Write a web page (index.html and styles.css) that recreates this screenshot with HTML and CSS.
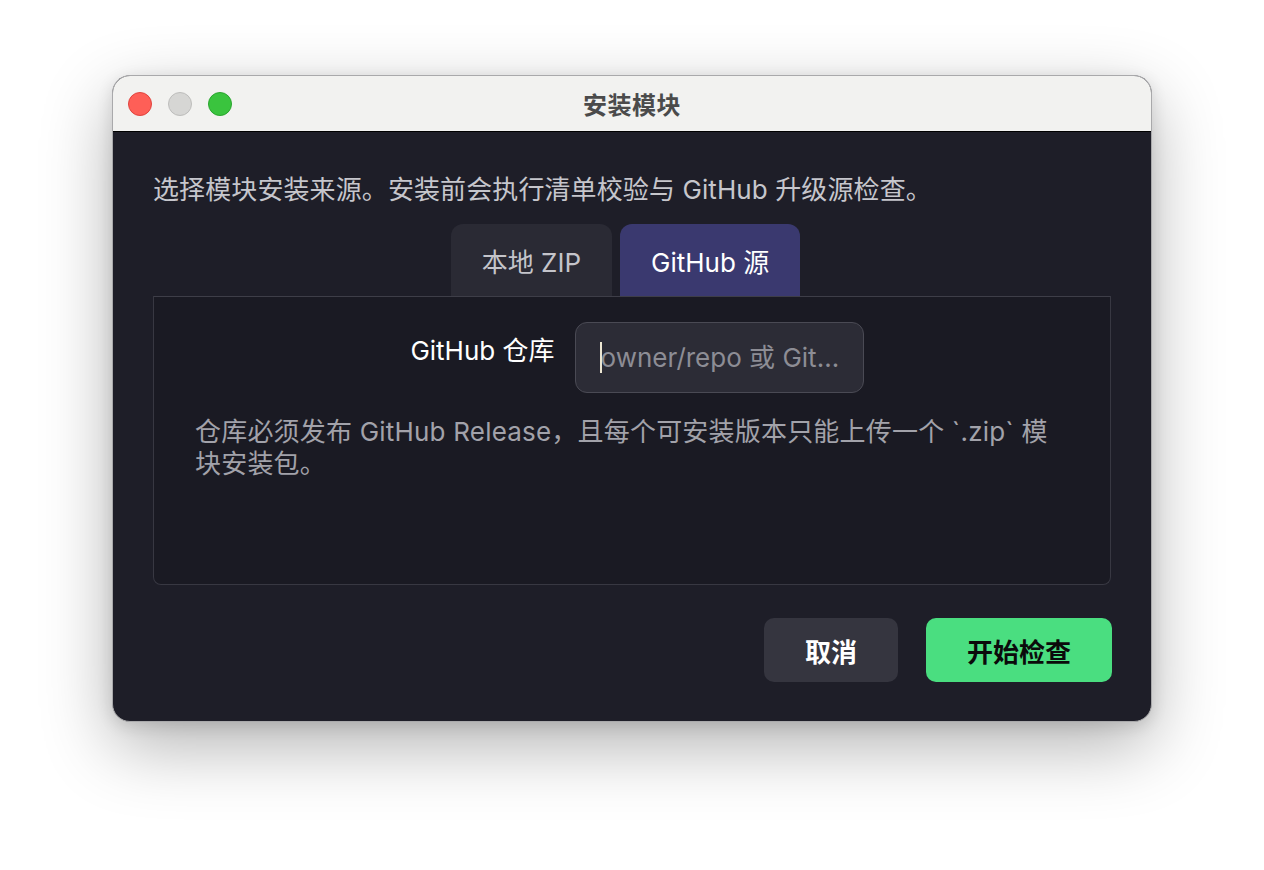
FILE: index.html
```html
<!DOCTYPE html>
<html lang="zh-CN">
<head>
<meta charset="utf-8">
<title>安装模块</title>
<link rel="stylesheet" href="styles.css">
</head>
<body>
<div class="stage">
  <div class="window">
    <div class="titlebar">
      <div class="lights">
        <span class="light red"></span>
        <span class="light gray"></span>
        <span class="light green"></span>
      </div>
      <div class="title">安装模块</div>
    </div>
    <div class="content">
      <p class="desc">选择模块安装来源。安装前会执行清单校验与 GitHub 升级源检查。</p>
      <div class="tabs">
        <div class="tab">本地 ZIP</div>
        <div class="tab active">GitHub 源</div>
      </div>
      <div class="panel">
        <div class="form-row">
          <label class="label" for="repo">GitHub 仓库</label>
          <div class="input-wrap">
            <input id="repo" class="input" type="text" placeholder="owner/repo 或 GitHub URL">
            <span class="caret"></span>
          </div>
        </div>
        <p class="hint">仓库必须发布 GitHub Release，且每个可安装版本只能上传一个 `.zip` 模块安装包。</p>
      </div>
      <div class="actions">
        <button class="btn cancel">取消</button>
        <button class="btn primary">开始检查</button>
      </div>
    </div>
  </div>
</div>
</body>
</html>
```

FILE: styles.css
```css
* { box-sizing: border-box; }

html, body {
  margin: 0;
  padding: 0;
  background: #ffffff;
}

body {
  min-height: 870px;
  font-family: Inter, "Noto Sans CJK SC", "Noto Sans", sans-serif;
}

.stage {
  min-height: 870px;
  display: flex;
  justify-content: center;
  align-items: flex-start;
  padding-top: 75px;
}

.window {
  width: 1040px;
  height: 647px;
  border-radius: 18px;
  overflow: hidden;
  background: #1e1e28;
  border: 1px solid #a9a9ab;
  box-shadow: 0 24px 70px rgba(0, 0, 0, 0.30), 0 4px 16px rgba(0, 0, 0, 0.12);
  display: flex;
  flex-direction: column;
}

.titlebar {
  position: relative;
  height: 56px;
  flex: none;
  background: #f2f2f0;
  border-bottom: 1px solid #000000;
  display: flex;
  align-items: center;
  justify-content: center;
}

.lights {
  position: absolute;
  left: 15px;
  top: 16px;
  display: flex;
  gap: 16px;
}

.light {
  width: 24px;
  height: 24px;
  border-radius: 50%;
}
.light.red { background: #fe5f57; border: 1px solid #e0443e; }
.light.gray { background: #d6d6d4; border: 1px solid #bdbdbb; }
.light.green { background: #3ac43e; border: 1px solid #2aa52e; }

.title {
  font-size: 24px;
  font-weight: 700;
  color: #4b4b4b;
  letter-spacing: 0.5px;
}

.content {
  flex: 1;
  padding: 40px 39px 39px 40px;
  display: flex;
  flex-direction: column;
}

.desc {
  margin: 0;
  font-size: 26px;
  letter-spacing: 0.1px;
  line-height: 36px;
  color: #c6c6cc;
}

.tabs {
  margin-top: 16px;
  display: flex;
  justify-content: center;
  gap: 8px;
  padding-right: 14px;
}

.tab {
  height: 72px;
  padding: 0 31px;
  display: flex;
  align-items: center;
  border-radius: 12px 12px 0 0;
  background: #2a2a34;
  color: #c4c4ca;
  font-size: 26px;
}

.tab.active {
  background: #3a396f;
  color: #ffffff;
}

.panel {
  height: 289px;
  margin-right: 1px;
  background: #1a1a23;
  border: 1px solid #383842;
  border-top-color: #3e3e48;
  border-radius: 0 0 8px 8px;
  padding: 25px 41px 0 41px;
}

.form-row {
  display: flex;
  justify-content: center;
  align-items: flex-start;
  gap: 20px;
  padding-left: 10px;
}

.label {
  font-size: 26px;
  line-height: 36px;
  color: #ffffff;
  padding-top: 11px;
}

.input-wrap {
  position: relative;
}

.input {
  display: block;
  width: 289px;
  height: 71px;
  border-radius: 12px;
  border: 1px solid #4a4a54;
  background: #2c2c36;
  padding: 0 18px 0 25px;
  font-family: Inter, "Noto Sans CJK SC", sans-serif;
  font-size: 26px;
  color: #e8e8ec;
  outline: none;
  text-overflow: ellipsis;
}

.input::placeholder {
  color: #8d8d95;
}

.caret {
  position: absolute;
  left: 25px;
  top: 20px;
  width: 2px;
  height: 31px;
  background: #ece6d2;
}

.hint {
  margin: 23px 0 0 0;
  font-size: 26px;
  letter-spacing: 0.2px;
  line-height: 32px;
  color: #a2a2aa;
}

.actions {
  margin-top: auto;
  display: flex;
  justify-content: flex-end;
  gap: 28px;
}

.btn {
  height: 64px;
  padding: 0 41px;
  border: none;
  border-radius: 10px;
  font-family: Inter, "Noto Sans CJK SC", sans-serif;
  font-size: 26px;
  font-weight: 700;
}

.btn.cancel {
  background: #35353f;
  color: #ffffff;
}

.btn.primary {
  background: #4ade80;
  color: #0b0b0b;
}
```
